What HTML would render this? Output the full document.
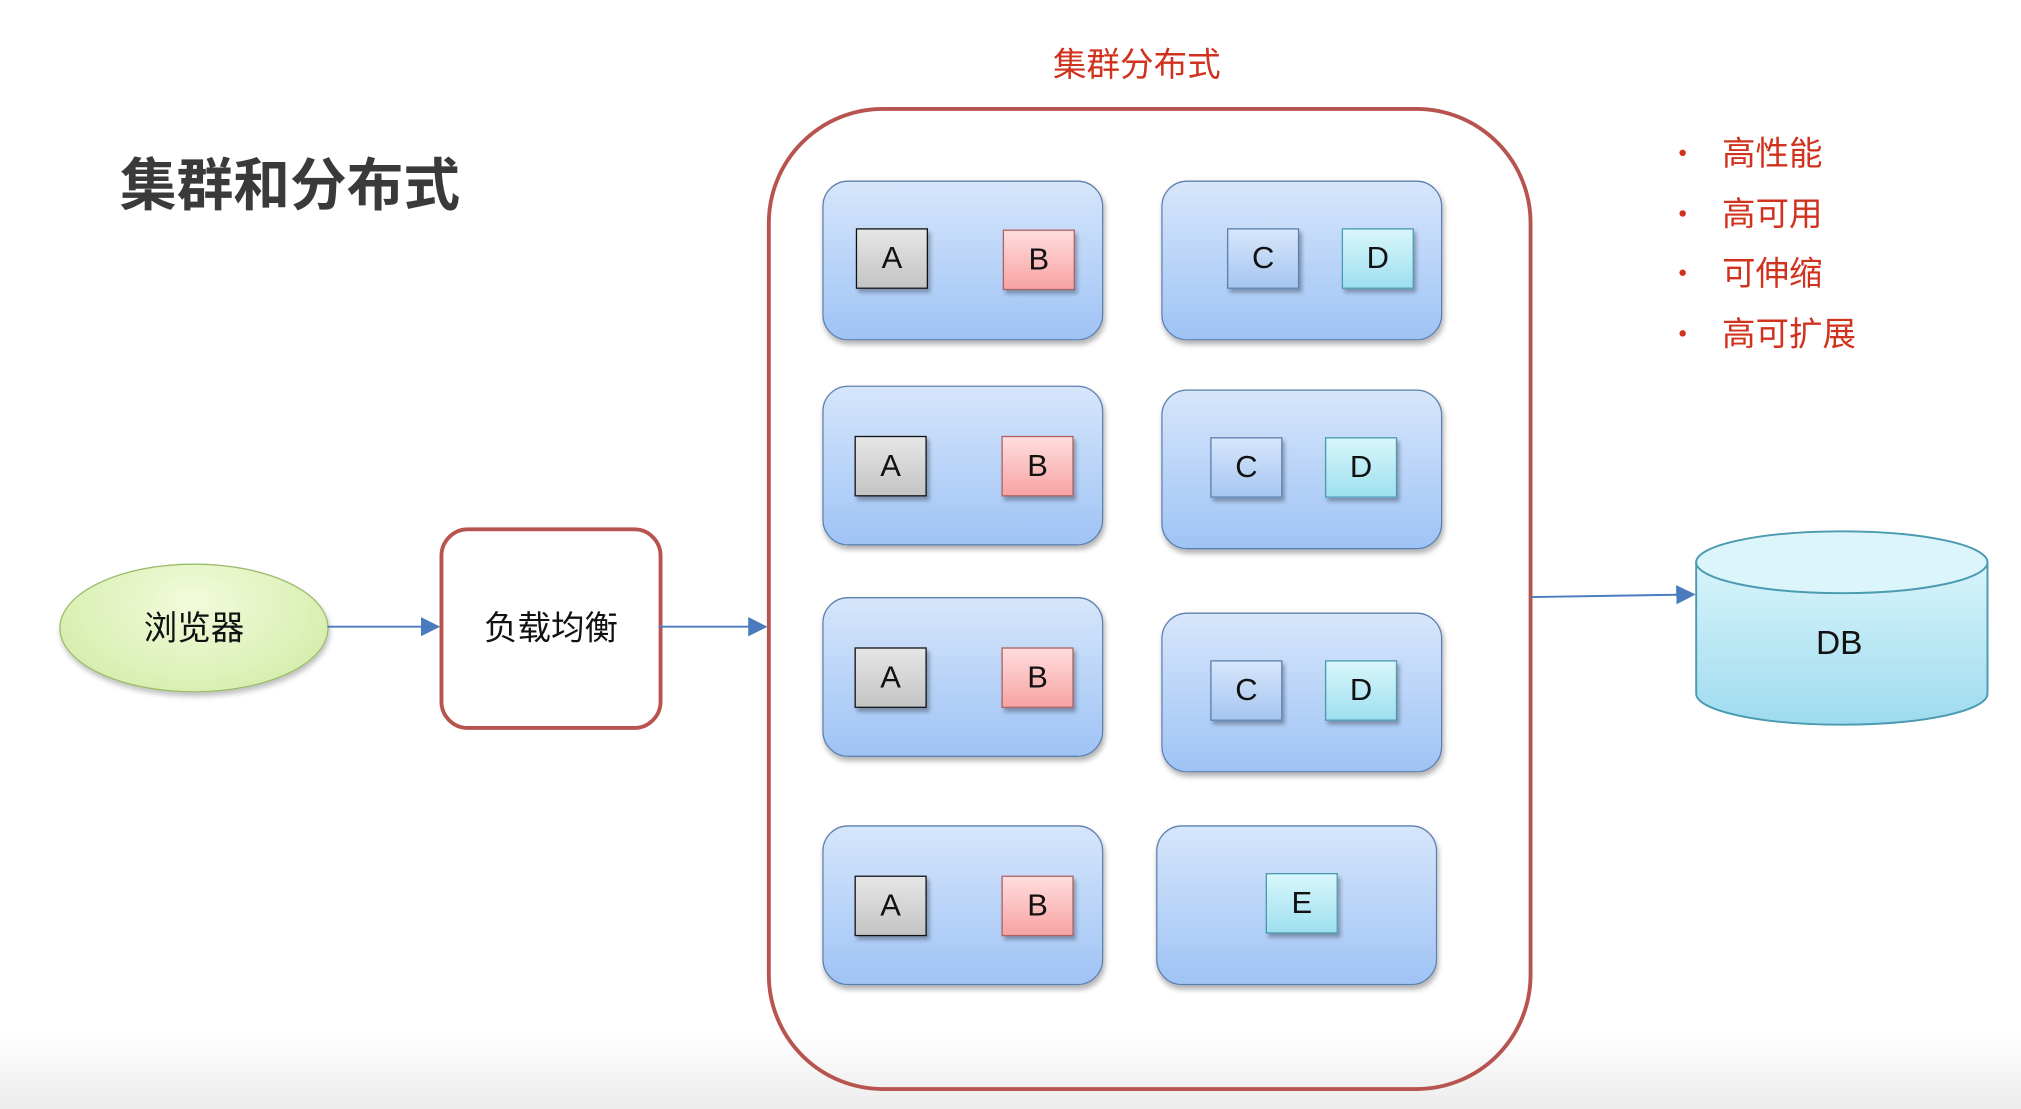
<!DOCTYPE html>
<html><head><meta charset="utf-8"><style>
html,body{margin:0;padding:0;width:2021px;height:1109px;overflow:hidden;background:#fff}
#s{position:absolute;left:0;top:0;width:1568px;height:860px;transform:scale(1.28890,1.28953);transform-origin:0 0;font-family:"Liberation Sans","Noto Sans CJK SC",sans-serif;background:linear-gradient(#fff 0,#fff 800px,#ececec 860px)}
.a{position:absolute}
.box{position:absolute;width:216px;height:122px;border:1.5px solid #5b7fae;border-radius:20px;background:linear-gradient(#d6e6fb,#9fc3f5);box-shadow:1px 3px 4px rgba(0,0,0,.3)}
.sq{position:absolute;width:54px;height:45px;border:1.5px solid #333;font-size:24px;text-align:center;line-height:45px;color:#111;box-shadow:2px 3px 3px rgba(0,0,0,.3)}
.A{background:linear-gradient(#e6e6e6,#c4c4c4);border-color:#111}
.B{background:linear-gradient(#fdd,#f8a3a3);border-color:#b06060}
.C{background:linear-gradient(#d6e6fb,#a6c6f0);border-color:#5b7fae}
.D{background:linear-gradient(#d8f6fb,#9ee0ef);border-color:#4a9ab0}
.bl{position:absolute;color:#d0321e;font-size:26px}
.dot{position:absolute;left:1303px;width:5px;height:5px;border-radius:50%;background:#d0321e}
</style></head><body><div id="s">
<div class="a" style="left:93px;top:108px;font-size:44px;font-weight:bold;color:#3a3a3a">集群和分布式</div>
<div class="a" style="left:817px;top:30px;font-size:26px;color:#d0321e">集群分布式</div>
<div class="a" style="left:595px;top:83px;width:588px;height:757px;border:3px solid #b85450;border-radius:90px"></div>

<div class="box" style="left:638px;top:140px"><div class="sq A" style="left:25px;top:36px">A</div><div class="sq B" style="left:139px;top:37px">B</div></div>
<div class="box" style="left:901px;top:140px"><div class="sq C" style="left:50px;top:36px">C</div><div class="sq D" style="left:139px;top:36px">D</div></div>
<div class="box" style="left:638px;top:299px"><div class="sq A" style="left:24px;top:38px">A</div><div class="sq B" style="left:138px;top:38px">B</div></div>
<div class="box" style="left:901px;top:302px"><div class="sq C" style="left:37px;top:36px">C</div><div class="sq D" style="left:126px;top:36px">D</div></div>
<div class="box" style="left:638px;top:463px"><div class="sq A" style="left:24px;top:38px">A</div><div class="sq B" style="left:138px;top:38px">B</div></div>
<div class="box" style="left:901px;top:475px"><div class="sq C" style="left:37px;top:36px">C</div><div class="sq D" style="left:126px;top:36px">D</div></div>
<div class="box" style="left:638px;top:640px"><div class="sq A" style="left:24px;top:38px">A</div><div class="sq B" style="left:138px;top:38px">B</div></div>
<div class="box" style="left:897px;top:640px"><div class="sq D" style="left:84px;top:36px">E</div></div>

<div class="a" style="left:46px;top:437px;width:207px;height:98px;border-radius:50%;border:1.5px solid #9aba6a;background:radial-gradient(ellipse at 50% 30%,#f2fbdc,#cfeaa0);box-shadow:1px 3px 4px rgba(0,0,0,.25);text-align:center;line-height:98px;font-size:26px;color:#111">浏览器</div>
<div class="a" style="left:341px;top:409px;width:167px;height:151px;border:3px solid #b85450;border-radius:22px;text-align:center;line-height:151px;font-size:26px;color:#111">负载均衡</div>

<svg class="a" style="left:0;top:0" width="1568" height="860">
<defs><marker id="m" markerWidth="10" markerHeight="10" refX="9" refY="5" orient="auto"><path d="M0,0 L10,5 L0,10z" fill="#4a7bbf"/></marker></defs>
<line x1="254" y1="486" x2="340" y2="486" stroke="#4a7bbf" stroke-width="1.5" marker-end="url(#m)"/>
<line x1="511" y1="486" x2="594" y2="486" stroke="#4a7bbf" stroke-width="1.5" marker-end="url(#m)"/>
<line x1="1188" y1="463" x2="1314" y2="461" stroke="#4a7bbf" stroke-width="1.5" marker-end="url(#m)"/>
<defs><linearGradient id="g" x1="0" x2="0" y1="0" y2="1"><stop offset="0" stop-color="#d8f4fb"/><stop offset="1" stop-color="#9edbee"/></linearGradient></defs>
<path d="M1316,436 L1316,538 A113,24 0 0 0 1542,538 L1542,436 Z" fill="url(#g)" stroke="#4a9ab0" stroke-width="1.5"/>
<ellipse cx="1429" cy="436" rx="113" ry="24" fill="#dcf5fb" stroke="#4a9ab0" stroke-width="1.5"/>
<text x="1427" y="507" font-size="26" text-anchor="middle" font-family="Liberation Sans,sans-serif" fill="#111">DB</text>
</svg>

<div class="dot" style="top:116px"></div><div class="bl" style="left:1336px;top:99px">高性能</div>
<div class="dot" style="top:163px"></div><div class="bl" style="left:1336px;top:146px">高可用</div>
<div class="dot" style="top:209px"></div><div class="bl" style="left:1336px;top:192px">可伸缩</div>
<div class="dot" style="top:256px"></div><div class="bl" style="left:1336px;top:239px">高可扩展</div>
</div></body></html>
